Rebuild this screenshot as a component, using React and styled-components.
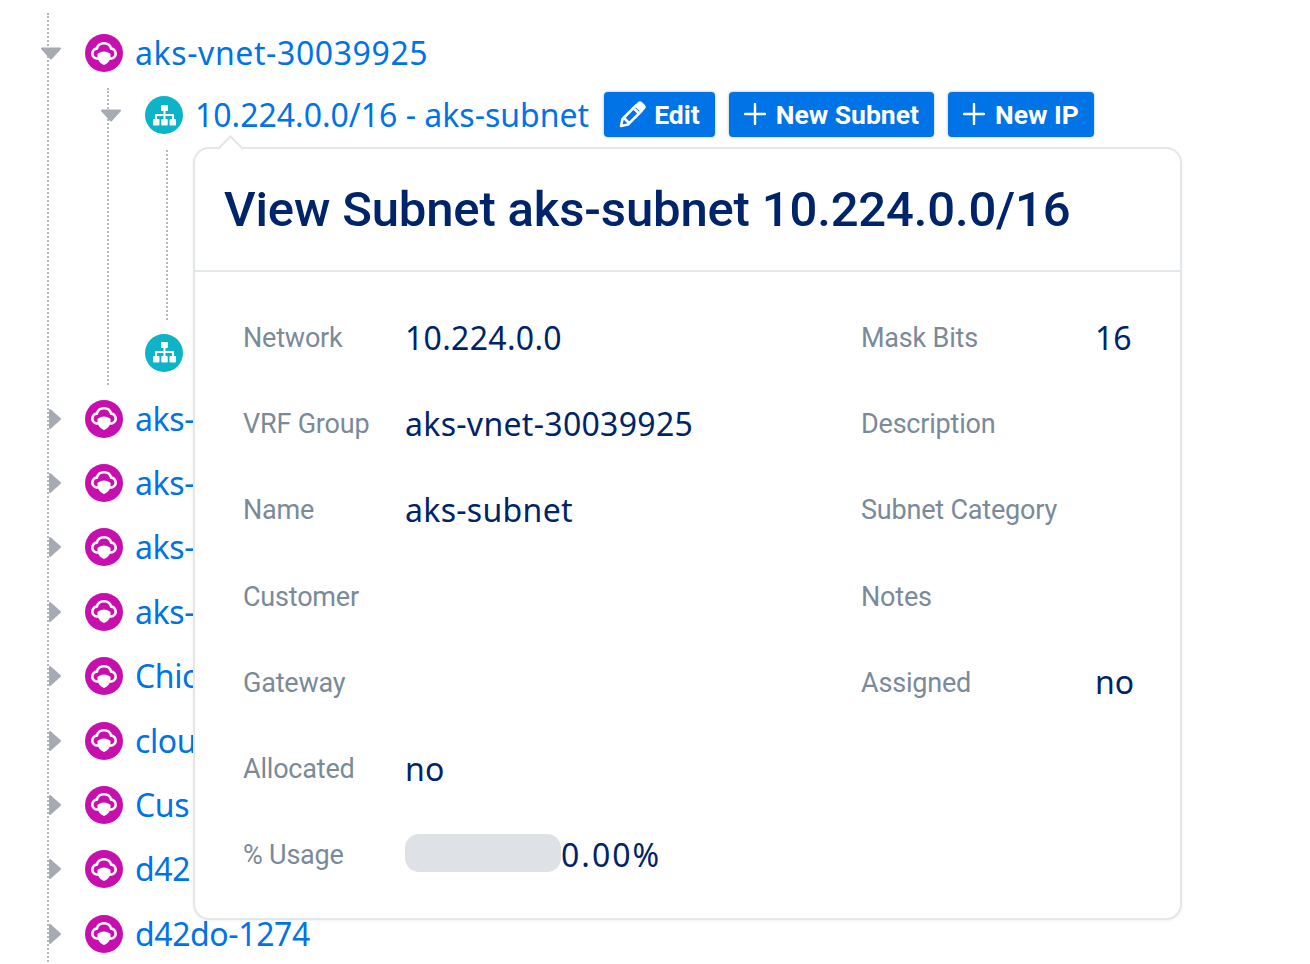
import { Fragment } from 'react'
import styled, { createGlobalStyle } from 'styled-components'

const GlobalStyle = createGlobalStyle`
  html, body {
    margin: 0;
    height: 100%;
    overflow: hidden;
    background: #fff;
  }
  body {
    font-family: "Noto Sans", "Open Sans", sans-serif;
  }
`

const Page = styled.div`
  position: relative;
  width: 1310px;
  height: 964px;
  overflow: hidden;
  padding-top: 13px;
  box-sizing: border-box;
`

const Tree = styled.ul`
  list-style: none;
  margin: 0 0 0 ${(props) => props.$left}px;
  padding: ${(props) => props.$top || 0}px 0 0;
  border-left: 2px dotted #b4b8bd;
`

const Branch = styled.li`
  margin: 3px 0 1px;
`

const Guide = styled.div`
  height: 170px;
  margin: 8px 0 0 57px;
  border-left: 2px dotted #b4b8bd;
`

const Row = styled.li`
  display: flex;
  align-items: center;
  height: ${(props) => props.$height || 64.4}px;
  margin-left: -9px;
`

const Toggle = styled.svg`
  width: 22px;
  height: 22px;
  flex: none;
  margin-right: 23px;
  fill: #a6aab2;
  stroke: #a6aab2;
  stroke-width: 2;
  stroke-linejoin: round;
`

const NoToggle = styled.span`
  width: 22px;
  flex: none;
  margin-right: 23px;
`

const Circle = styled.span`
  display: flex;
  align-items: center;
  justify-content: center;
  flex: none;
  width: 38px;
  height: 38px;
  border-radius: 50%;
  background: ${(props) => props.$color};
  margin-right: 12px;
`

const Name = styled.a`
  font-size: 32px;
  line-height: 40px;
  letter-spacing: ${(props) => props.$spacing || 0}px;
  color: #0073e6;
  white-space: nowrap;
`

const Actions = styled.div`
  display: flex;
  gap: 14px;
  margin: 0 0 2px 15px;
`

const Button = styled.button`
  display: flex;
  align-items: center;
  gap: ${(props) => props.$gap}px;
  height: 45px;
  padding: 0 15px;
  border: 0;
  border-radius: 4px;
  background: #0073e6;
  box-shadow: 0 0 3px rgba(0, 0, 0, 0.3);
  color: #fff;
  font-family: Roboto, sans-serif;
  font-size: 26.5px;
  font-weight: 700;
`

const Popover = styled.section`
  position: absolute;
  left: 193px;
  top: 147px;
  width: 989px;
  height: 773px;
  box-sizing: border-box;
  background: #fff;
  border: 2px solid #e4e7ea;
  border-radius: 16px;
  box-shadow: 0 1px 3px rgba(0, 0, 0, 0.06);

  &::before {
    content: '';
    position: absolute;
    left: 26px;
    top: -10px;
    width: 17px;
    height: 17px;
    background: #fff;
    border-top: 2px solid #e4e7ea;
    border-left: 2px solid #e4e7ea;
    transform: rotate(45deg);
  }
`

const Header = styled.h2`
  margin: 0;
  height: 123px;
  box-sizing: border-box;
  padding: 31px 0 0 29px;
  border-bottom: 2px solid #e4e7ea;
  color: #002469;
  font-family: Roboto, sans-serif;
  font-size: 49px;
  line-height: 60px;
  font-weight: 500;
  letter-spacing: -0.15px;
`

const Fields = styled.div`
  display: grid;
  grid-template-columns: 162px 456px 234px 1fr;
  grid-auto-rows: 86.2px;
  padding: 22px 0 0 48px;
  align-items: center;
`

const Label = styled.div`
  padding-top: 2px;
  color: #7a8a99;
  font-family: Roboto, sans-serif;
  font-size: 27px;
  letter-spacing: -0.2px;
`

const Value = styled.div`
  display: flex;
  align-items: center;
  color: #002469;
  font-size: 32px;
  letter-spacing: ${(props) => props.$spacing || 0}px;
`

const Progress = styled.div`
  width: 156px;
  height: 38px;
  margin-bottom: 2px;
  border-radius: 14px;
  background: #dee2e6;
`

const CloudIcon = () => (
  <svg width="26" height="23" viewBox="0 0 26 23" overflow="visible">
    <path
      fill="none"
      stroke="#fff"
      strokeWidth="2.600"
      strokeLinecap="round"
      strokeLinejoin="round"
      d="M6.500 16.500H5.500a5 5 0 0 1 .3-9.900A7.500 7.500 0 0 1 20.200 6.600a5 5 0 0 1 .3 9.900h-1"
    />
    <path
      fill="#fff"
      d="M13 9.500c2.500 0 4.500 1.200 6.500 2.500v3c0 3.500-3.500 7-6.500 8-3-1-6.500-4.500-6.500-8v-3c2-1.300 4-2.500 6.500-2.500z"
    />
  </svg>
)

const SubnetIcon = () => (
  <svg width="25" height="21" viewBox="0 0 24 21" fill="#fff">
    <rect x="8.500" y="0" width="7" height="6" rx="1" />
    <rect x="0.500" y="14" width="6.500" height="6.500" rx="1" />
    <rect x="8.750" y="14" width="6.500" height="6.500" rx="1" />
    <rect x="17" y="14" width="6.500" height="6.500" rx="1" />
    <path d="M11 6h2v3h7.500a1 1 0 0 1 1 1v4h-2v-3h-6.500v3h-2v-3h-6.500v3h-2v-4a1 1 0 0 1 1-1H11z" />
  </svg>
)

const PencilIcon = () => (
  <svg width="27" height="27" viewBox="0 0 27 27" fill="none" stroke="#fff" strokeWidth="2.600" strokeLinejoin="round">
    <path d="M2 25l1.500-7L17 4.500l5.500 5.500L9 23.500z" />
    <path d="M5 17l5 5M15.500 8l4 4" />
    <path fill="#fff" d="M20 2a1.500 1.500 0 0 1 2 0l3 3a1.500 1.500 0 0 1 0 2l-1.500 1.500-5-5z" />
  </svg>
)

const PlusIcon = () => (
  <svg width="22" height="22" viewBox="0 0 22 22" stroke="#fff" strokeWidth="2.400" strokeLinecap="round">
    <path d="M11 1v20M1 11h20" />
  </svg>
)

const Chevron = ({ open }) => (
  <Toggle viewBox="0 0 22 22">
    <path d={open ? 'M2 6.500h18l-9 10z' : 'M10 2v18l10-9z'} />
  </Toggle>
)

const others = ['aks-', 'aks-', 'aks-', 'aks-', 'Chic', 'clou', 'Cus', 'd42', 'd42do-1274']

const fields = [
  ['Network', '10.224.0.0', 'Mask Bits', '16'],
  ['VRF Group', 'aks-vnet-30039925', 'Description', ''],
  ['Name', 'aks-subnet', 'Subnet Category', ''],
  ['Customer', '', 'Notes', ''],
  ['Gateway', '', 'Assigned', 'no'],
  ['Allocated', 'no', '', ''],
]

const App = () => (
  <Page>
    <GlobalStyle />
    <Tree $left={47} $top={8}>
      <Row>
        <Chevron open />
        <Circle $color="#c70fae"><CloudIcon /></Circle>
        <Name $spacing={0.6}>aks-vnet-30039925</Name>
      </Row>
      <Branch>
        <Tree $left={58}>
          <Row $height={54}>
            <Chevron open />
            <Circle $color="#0db3c7"><SubnetIcon /></Circle>
            <Name>10.224.0.0/16 - aks-subnet</Name>
            <Actions>
              <Button $gap={8}><PencilIcon />Edit</Button>
              <Button $gap={10}><PlusIcon />New Subnet</Button>
              <Button $gap={10}><PlusIcon />New IP</Button>
            </Actions>
          </Row>
          <li>
            <Guide />
          </li>
          <Row $height={65}>
            <NoToggle />
            <Circle $color="#0db3c7"><SubnetIcon /></Circle>
          </Row>
        </Tree>
      </Branch>
      {others.map((name, index) => (
        <Row key={index}>
          <Chevron />
          <Circle $color="#c70fae"><CloudIcon /></Circle>
          <Name $spacing={-0.4}>{name}</Name>
        </Row>
      ))}
    </Tree>
    <Popover>
      <Header>View Subnet aks-subnet 10.224.0.0/16</Header>
      <Fields>
        {fields.map(([a, b, c, d]) => (
          <Fragment key={a}>
            <Label>{a}</Label>
            <Value $spacing={0.3}>{b}</Value>
            <Label>{c}</Label>
            <Value>{d}</Value>
          </Fragment>
        ))}
        <Label>% Usage</Label>
        <Value $spacing={2}><Progress />0.00%</Value>
      </Fields>
    </Popover>
  </Page>
)

export default App
